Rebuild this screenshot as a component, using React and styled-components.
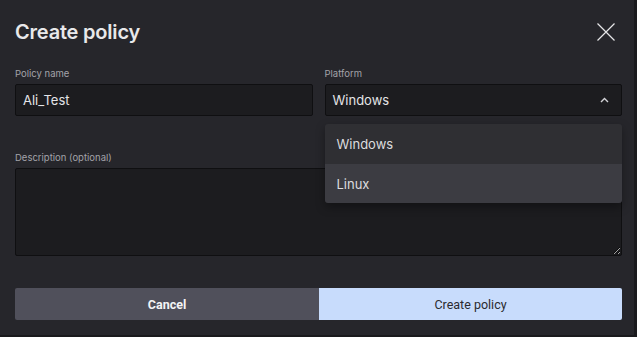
import styled, { createGlobalStyle } from "styled-components"

const GlobalStyle = createGlobalStyle`
  html, body {
    margin: 0;
    padding: 0;
    background: #1a1a1d;
  }
  * { box-sizing: border-box; }
`

const Dialog = styled.div`
  width: 634px;
  height: 335px;
  background: #26262b;
  padding: 0 12px 0 15px;
  display: flex;
  flex-direction: column;
  font-family: Inter, "Noto Sans", sans-serif;
  color: #e4e4e7;
`

const Header = styled.div`
  height: 68px;
  display: flex;
  justify-content: space-between;
  align-items: flex-start;
  padding-top: 20px;
`

const Title = styled.h1`
  margin: 0;
  font-size: 20px;
  font-weight: 600;
  letter-spacing: -0.2px;
  color: #e8e8ea;
  line-height: 24px;
`

const CloseButton = styled.button`
  background: none;
  border: 0;
  padding: 0;
  margin: 2px 6px 0 0;
  width: 20px;
  height: 20px;
  cursor: pointer;
`

const Row = styled.div`
  display: grid;
  grid-template-columns: 1fr 1fr;
  column-gap: 12px;
`

const Field = styled.div`
  position: relative;
  display: flex;
  flex-direction: column;
`

const Label = styled.label`
  font-size: 9.5px;
  color: #a3a3a9;
  line-height: 12px;
  margin-bottom: 4px;
`

const Input = styled.div`
  height: 32px;
  background: #1c1c1f;
  border: 1px solid #0f0f11;
  border-radius: 2px;
  display: flex;
  align-items: center;
  justify-content: space-between;
  padding: 0 12px 0 7px;
  font-size: 13px;
  color: #e4e4e7;
`

const Menu = styled.ul`
  position: absolute;
  top: 56px;
  left: 0;
  right: 0;
  margin: 0;
  padding: 0;
  list-style: none;
  border-radius: 3px;
  overflow: hidden;
  box-shadow: 0 4px 10px rgba(0, 0, 0, 0.35);
  z-index: 2;
`

const Option = styled.li`
  height: ${p => (p.$first ? 40 : 39)}px;
  display: flex;
  align-items: center;
  padding-left: 12px;
  font-size: 13px;
  color: #dcdcdf;
  background: ${p => (p.$hover ? "#3c3c42" : "#2f2f33")};
`

const DescField = styled(Field)`
  margin-top: 36px;
`

const TextArea = styled.textarea`
  height: 88px;
  background: #1c1c1f;
  border: 1px solid #0f0f11;
  border-radius: 2px;
  resize: vertical;
  color: #e4e4e7;
  font-family: inherit;
  outline: none;
  color-scheme: dark;
`

const Actions = styled.div`
  margin-top: 32px;
  display: grid;
  grid-template-columns: 304px 1fr;
  height: 32px;
`

const Button = styled.button`
  border: 0;
  font-family: Roboto, "Liberation Sans", sans-serif;
  font-size: 12.5px;
  font-weight: ${p => (p.$primary ? 400 : 700)};
  color: ${p => (p.$primary ? "#2a2a2e" : "#f4f4f5")};
  background: ${p => (p.$primary ? "#c8dcfc" : "#50505b")};
  border-radius: ${p => (p.$primary ? "0 2px 2px 0" : "2px 0 0 2px")};
  cursor: pointer;
`

function CloseIcon() {
  return (
    <svg width="20" height="20" viewBox="0 0 20 20">
      <path d="M1.5 1.5 L18.5 18.5 M18.5 1.5 L1.5 18.5" stroke="#e6e6e8" strokeWidth="1.2" fill="none" />
    </svg>
  )
}

function Chevron() {
  return (
    <svg width="9" height="6" viewBox="0 0 9 6">
      <path d="M1 5 L4.5 1.5 L8 5" stroke="#d4d4d8" strokeWidth="1.4" fill="none" />
    </svg>
  )
}

export default function App() {
  return (
    <>
      <GlobalStyle />
      <Dialog>
        <Header>
          <Title>Create policy</Title>
          <CloseButton aria-label="Close"><CloseIcon /></CloseButton>
        </Header>
        <Row>
          <Field>
            <Label>Policy name</Label>
            <Input>Ali_Test</Input>
          </Field>
          <Field>
            <Label>Platform</Label>
            <Input>
              <span>Windows</span>
              <Chevron />
            </Input>
            <Menu>
              <Option $first>Windows</Option>
              <Option $hover>Linux</Option>
            </Menu>
          </Field>
        </Row>
        <DescField>
          <Label>Description (optional)</Label>
          <TextArea />
        </DescField>
        <Actions>
          <Button>Cancel</Button>
          <Button $primary>Create policy</Button>
        </Actions>
      </Dialog>
    </>
  )
}
